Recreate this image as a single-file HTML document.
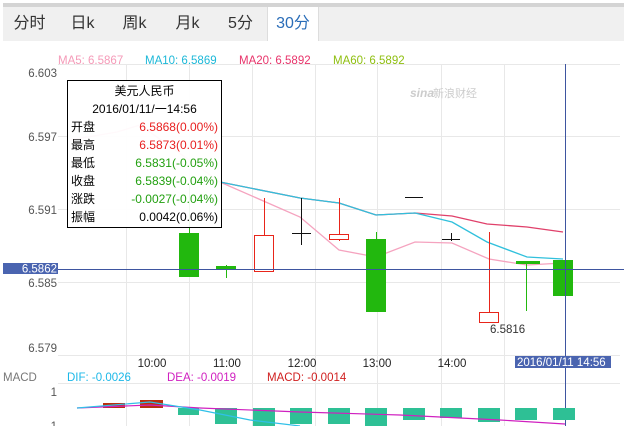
<!DOCTYPE html>
<html><head><meta charset="utf-8"><style>
body{margin:0;width:624px;height:426px;background:#fff;overflow:hidden;position:relative;font-family:"Liberation Sans","Noto Sans CJK SC",sans-serif;}
.top{position:absolute;left:3px;top:3px;width:621px;height:4px;background:#d4d4d4}
.tabs{position:absolute;left:3px;top:7px;width:621px;height:34px;background:#f0f0f0}
.tab{position:absolute;top:0;width:53px;height:34px;line-height:34px;font-size:16px;color:#333;text-align:center}
.act{background:#fff;color:#2a6db8;border-left:1px solid #ddd;border-right:1px solid #ddd;width:50px}
svg{position:absolute;left:0;top:0}
.tip{position:absolute;left:67px;top:80px;width:153px;height:146px;border:1px solid #000;background:rgba(255,255,255,0.93);font-size:12px}
.tip div{position:absolute;left:0;width:153px;height:18px;line-height:18px}
.tip span{position:absolute;left:3px}
.tip b{position:absolute;right:3px;font-weight:normal}
</style></head><body>
<div class="top"></div>
<div class="tabs">
<div class="tab" style="left:0">分时</div>
<div class="tab" style="left:53px">日k</div>
<div class="tab" style="left:105px">周k</div>
<div class="tab" style="left:158px">月k</div>
<div class="tab" style="left:211px">5分</div>
<div class="tab act" style="left:264px">30分</div>
</div>
<svg width="624" height="426" font-family="Liberation Sans, sans-serif" font-size="11.5">
<g font-size="11.5">
<text x="58" y="64" fill="#f59ab8">MA5: 6.5867</text>
<text x="145" y="64" fill="#1cb8d8">MA10: 6.5869</text>
<text x="239" y="64" fill="#e8336a">MA20: 6.5892</text>
<text x="333" y="64" fill="#8fbf10">MA60: 6.5892</text>
</g>
<g stroke="#e8e8e8" stroke-width="1">
<line x1="58" y1="64.5" x2="620" y2="64.5"/>
<line x1="58" y1="136.5" x2="620" y2="136.5"/>
<line x1="58" y1="209.5" x2="620" y2="209.5"/>
<line x1="58" y1="282.5" x2="620" y2="282.5"/>
<line x1="58" y1="355.5" x2="620" y2="355.5"/>
<line x1="58" y1="383.5" x2="620" y2="383.5"/>
<line x1="126.5" y1="64" x2="126.5" y2="426"/>
<line x1="189.5" y1="64" x2="189.5" y2="426"/>
<line x1="252.5" y1="64" x2="252.5" y2="426"/>
<line x1="315.5" y1="64" x2="315.5" y2="426"/>
<line x1="377.5" y1="64" x2="377.5" y2="426"/>
<line x1="441.5" y1="64" x2="441.5" y2="426"/>
<line x1="504.5" y1="64" x2="504.5" y2="426"/>
</g>
<g fill="#555" text-anchor="end">
<text x="57" y="77">6.603</text>
<text x="57" y="141">6.597</text>
<text x="57" y="214">6.591</text>
<text x="57" y="287">6.585</text>
<text x="57" y="352">6.579</text>
</g>
<text x="410" y="97" fill="#ccc" font-size="12" font-style="italic" font-weight="bold">sina</text>
<text x="433" y="97" fill="#ccc" font-size="11" font-family="Noto Sans CJK SC">新浪财经</text>
<polyline fill="none" stroke="#f5a3bf" stroke-width="1.3" points="70,140 117,132 140,125 220,182 300,217 339,250 376,257 415,242 452,243 489,259 527,265 563,263"/>
<polyline fill="none" stroke="#e0406a" stroke-width="1.3" points="220,182 300,198 339,203 376,215 415,213 452,216 487,224 527,227 563,232"/>
<polyline fill="none" stroke="#30c0dc" stroke-width="1.3" points="220,182 300,198 339,203 376,215 415,213 452,222 487,242 527,257 563,259"/>
<g stroke-width="1">
<line x1="189.5" y1="185" x2="189.5" y2="233" stroke="#22b80e"/>
<rect x="179" y="233" width="20" height="44" fill="#22b80e"/>
<line x1="226.5" y1="265" x2="226.5" y2="278" stroke="#22b80e"/>
<rect x="216" y="266" width="20" height="3" fill="#22b80e"/>
<line x1="264.5" y1="198" x2="264.5" y2="235" stroke="#e8251a"/>
<rect x="254.5" y="235.5" width="19" height="36" fill="none" stroke="#e8251a"/>
<line x1="301.5" y1="198" x2="301.5" y2="245" stroke="#111"/>
<line x1="292" y1="233.5" x2="311" y2="233.5" stroke="#111"/>
<line x1="339.5" y1="198" x2="339.5" y2="241" stroke="#e8251a"/>
<rect x="329.5" y="234.5" width="19" height="5" fill="#fff" stroke="#e8251a"/>
<line x1="405" y1="197.5" x2="423" y2="197.5" stroke="#111"/>
<line x1="376.5" y1="232" x2="376.5" y2="240" stroke="#22b80e"/>
<rect x="366" y="239" width="20" height="73" fill="#22b80e"/>
<line x1="451.5" y1="233" x2="451.5" y2="241" stroke="#111"/>
<line x1="442" y1="239.5" x2="460" y2="239.5" stroke="#111"/>
<line x1="489.5" y1="232" x2="489.5" y2="312" stroke="#e8251a"/>
<rect x="479.5" y="312.5" width="19" height="10" fill="none" stroke="#e8251a"/>
<line x1="526.5" y1="262" x2="526.5" y2="311" stroke="#22b80e"/>
<rect x="516" y="261" width="24" height="3" fill="#22b80e"/>
<rect x="553" y="260" width="20" height="36" fill="#22b80e"/>
</g>
<text x="490" y="333" fill="#333" font-size="11.5">6.5816</text>
<line x1="58" y1="269.5" x2="624" y2="269.5" stroke="#3e55a0"/>
<line x1="565.5" y1="64" x2="565.5" y2="426" stroke="#3e55a0"/>
<rect x="3" y="263" width="55" height="11" fill="#4a64b0"/>
<text x="57" y="272.5" fill="#fff" text-anchor="end">6.5862</text>
<g fill="#222" text-anchor="middle">
<text x="152" y="367">10:00</text>
<text x="227" y="367">11:00</text>
<text x="302" y="367">12:00</text>
<text x="377" y="367">13:00</text>
<text x="452" y="367">14:00</text>
</g>
<rect x="515" y="356" width="96" height="12" fill="#4a64b0"/>
<text x="517" y="366" fill="#fff">2016/01/11 14:56</text>
<text x="3" y="381" fill="#777">MACD</text>
<text x="67" y="381" fill="#1cb8e8">DIF: -0.0026</text>
<text x="167" y="381" fill="#d020c0">DEA: -0.0019</text>
<text x="267" y="381" fill="#d02020">MACD: -0.0014</text>
<text x="57" y="396" fill="#555" text-anchor="end">1</text>
<text x="57" y="430" fill="#555" text-anchor="end">-1</text>
<rect x="103" y="403" width="22" height="5" fill="#b8300f"/>
<rect x="140" y="400" width="23" height="8" fill="#b8300f"/>
<g fill="#2ec095">
<rect x="178" y="408" width="21" height="7"/>
<rect x="215" y="408" width="22" height="16"/>
<rect x="253" y="408" width="22" height="18"/>
<rect x="290" y="408" width="22" height="16"/>
<rect x="328" y="408" width="22" height="16"/>
<rect x="365" y="408" width="22" height="18"/>
<rect x="403" y="408" width="22" height="12"/>
<rect x="440" y="408" width="22" height="10"/>
<rect x="478" y="408" width="22" height="14"/>
<rect x="515" y="408" width="22" height="12"/>
<rect x="553" y="408" width="22" height="12"/>
</g>
<polyline fill="none" stroke="#d020c0" stroke-width="1.2" points="77,408 150,405 200,408 300,412 400,415 500,420 565,424"/>
<polyline fill="none" stroke="#30c0e8" stroke-width="1.2" points="77,408 150,402 200,410 250,420 300,426"/>
</svg>
<div class="tip">
<div style="top:1px;text-align:center">美元人民币</div>
<div style="top:19px;text-align:center">2016/01/11/一14:56</div>
<div style="top:37px"><span>开盘</span><b style="color:#e82020">6.5868(0.00%)</b></div>
<div style="top:55px"><span>最高</span><b style="color:#e82020">6.5873(0.01%)</b></div>
<div style="top:73px"><span>最低</span><b style="color:#22a010">6.5831(-0.05%)</b></div>
<div style="top:91px"><span>收盘</span><b style="color:#22a010">6.5839(-0.04%)</b></div>
<div style="top:109px"><span>涨跌</span><b style="color:#22a010">-0.0027(-0.04%)</b></div>
<div style="top:127px"><span>振幅</span><b style="color:#000">0.0042(0.06%)</b></div>
</div>
</body></html>
